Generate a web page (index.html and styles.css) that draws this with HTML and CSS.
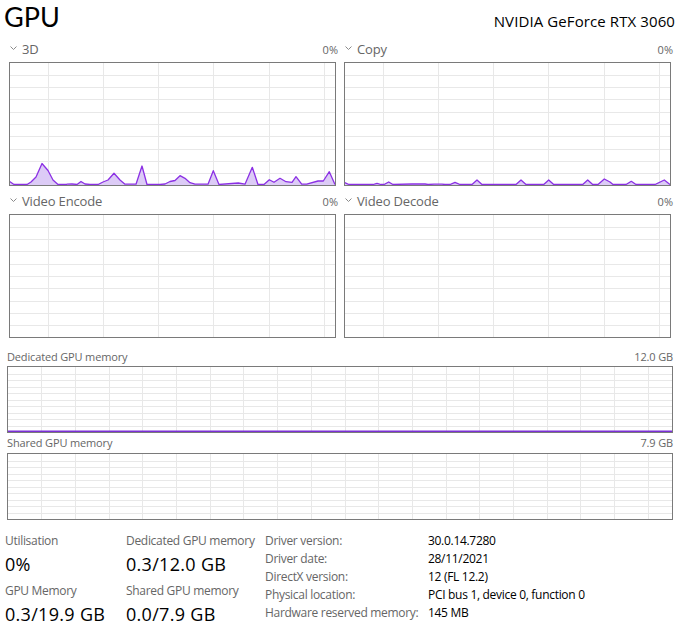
FILE: index.html
```html
<!DOCTYPE html>
<html lang="en">
<head>
<meta charset="utf-8">
<title>GPU</title>
<link rel="stylesheet" href="styles.css">
</head>
<body>
<svg class="defs" width="0" height="0" aria-hidden="true">
  <defs>
    <g id="egrid" fill="none" stroke="#e8e8e8" stroke-width="1" shape-rendering="crispEdges">
      <path d="M0 12.5H325M0 24.5H325M0 36.5H325M0 49.5H325M0 61.5H325M0 73.5H325M0 86.5H325M0 98.5H325M0 110.5H325M38.5 0V122M93.5 0V122M148.5 0V122M203.5 0V122M259.5 0V122M314.5 0V122"/>
    </g>
    <g id="mgrid" fill="none" stroke="#e8e8e8" stroke-width="1" shape-rendering="crispEdges">
      <path d="M0 7.5H664M0 13.5H664M0 20.5H664M0 26.5H664M0 33.5H664M0 39.5H664M0 46.5H664M0 52.5H664M0 59.5H664M33.5 0V65M67.5 0V65M101.5 0V65M134.5 0V65M168.5 0V65M202.5 0V65M235.5 0V65M269.5 0V65M303.5 0V65M337.5 0V65M370.5 0V65M404.5 0V65M438.5 0V65M471.5 0V65M505.5 0V65M539.5 0V65M572.5 0V65M606.5 0V65M640.5 0V65"/>
    </g>
    <symbol id="chev" viewBox="0 0 7 4">
      <polyline points="0.5,0.5 3.5,3.5 6.5,0.5" fill="none" stroke="#8a8a8a" stroke-width="1"/>
    </symbol>
  </defs>
</svg>

<div class="page">
  <header class="top">
    <h1 class="title">GPU</h1>
    <div class="model">NVIDIA GeForce RTX 3060</div>
  </header>

  <section class="engines">
    <div class="engine">
      <div class="engine-head">
        <span class="engine-name"><svg class="chev" width="7" height="4"><use href="#chev"/></svg>3D</span>
        <span class="pct">0%</span>
      </div>
      <div class="chart">
        <svg class="plot" width="325" height="122" viewBox="0 0 325 122">
          <use href="#egrid"/>
          <g transform="translate(-10,-63)">
            <polygon class="area" points="9,185 9,181 14,184.5 27,184.5 31,182 36,177 42,163.5 48,170.5 53,180 58,184.5 66,184.5 67,184.2 72,184 77,184.5 81,181.5 85,184 90,184.5 98,184.5 103,182 108,180 114,173.3 120,180 125,184.2 136,184.2 142,166 147,184.5 160,184.5 165,184 170,181.5 175,180.5 180,175.7 185,178.3 190,182.7 195,184.2 199,184.2 208,184.2 213.3,170.7 219,184.5 238.3,183 245,184.2 252.3,167.3 258,184.5 264,184.5 269.3,179.7 274,182.3 280,178.3 286,181.7 292,182.3 296,176.7 301.7,184.2 306.7,184.2 318,181 323.3,181 329.3,171.7 335,184.5 335,185"/>
            <polyline class="line" points="9,181 14,184.5 27,184.5 31,182 36,177 42,163.5 48,170.5 53,180 58,184.5 66,184.5 67,184.2 72,184 77,184.5 81,181.5 85,184 90,184.5 98,184.5 103,182 108,180 114,173.3 120,180 125,184.2 136,184.2 142,166 147,184.5 160,184.5 165,184 170,181.5 175,180.5 180,175.7 185,178.3 190,182.7 195,184.2 199,184.2 208,184.2 213.3,170.7 219,184.5 238.3,183 245,184.2 252.3,167.3 258,184.5 264,184.5 269.3,179.7 274,182.3 280,178.3 286,181.7 292,182.3 296,176.7 301.7,184.2 306.7,184.2 318,181 323.3,181 329.3,171.7 335,184.5"/>
          </g>
        </svg>
      </div>
    </div>

    <div class="engine">
      <div class="engine-head">
        <span class="engine-name"><svg class="chev" width="7" height="4"><use href="#chev"/></svg>Copy</span>
        <span class="pct">0%</span>
      </div>
      <div class="chart">
        <svg class="plot" width="325" height="122" viewBox="0 0 325 122">
          <use href="#egrid"/>
          <g transform="translate(-345,-63)">
            <polygon class="area" points="344,185 344,182.3 349,184.5 373,184.5 377,183.3 381,184.5 384,184.5 388.7,182 393,184.5 412,184 425,184 428,184.5 434,184.2 442,184.2 445,184.5 450,184.5 455,182.3 460,184.5 472,184.5 477,180 482,184.5 516,184.5 521,180 526,184.5 543.7,184.5 548.7,180 553.7,184.5 582.7,184.5 587.7,180 592.7,184.5 598,184.5 604.3,179 610,182 613,184.5 626,184.5 631.3,181.3 636,184.5 655,184.5 664.3,180 670,184.5 670,185"/>
            <polyline class="line" points="344,182.3 349,184.5 373,184.5 377,183.3 381,184.5 384,184.5 388.7,182 393,184.5 412,184 425,184 428,184.5 434,184.2 442,184.2 445,184.5 450,184.5 455,182.3 460,184.5 472,184.5 477,180 482,184.5 516,184.5 521,180 526,184.5 543.7,184.5 548.7,180 553.7,184.5 582.7,184.5 587.7,180 592.7,184.5 598,184.5 604.3,179 610,182 613,184.5 626,184.5 631.3,181.3 636,184.5 655,184.5 664.3,180 670,184.5"/>
          </g>
        </svg>
      </div>
    </div>

    <div class="engine">
      <div class="engine-head">
        <span class="engine-name"><svg class="chev" width="7" height="4"><use href="#chev"/></svg>Video Encode</span>
        <span class="pct">0%</span>
      </div>
      <div class="chart">
        <svg class="plot" width="325" height="122" viewBox="0 0 325 122"><use href="#egrid"/></svg>
      </div>
    </div>

    <div class="engine">
      <div class="engine-head">
        <span class="engine-name"><svg class="chev" width="7" height="4"><use href="#chev"/></svg>Video Decode</span>
        <span class="pct">0%</span>
      </div>
      <div class="chart">
        <svg class="plot" width="325" height="122" viewBox="0 0 325 122"><use href="#egrid"/></svg>
      </div>
    </div>
  </section>

  <section class="memory">
    <div class="mem-head first"><span>Dedicated GPU memory</span><span>12.0 GB</span></div>
    <div class="mem-chart">
      <svg class="plot" width="664" height="65" viewBox="0 0 664 65">
        <use href="#mgrid"/>
        <path class="mem-line" d="M0 64.2H664"/>
      </svg>
    </div>
    <div class="mem-head"><span>Shared GPU memory</span><span>7.9 GB</span></div>
    <div class="mem-chart">
      <svg class="plot" width="664" height="65" viewBox="0 0 664 65"><use href="#mgrid"/></svg>
    </div>
  </section>

  <section class="stats">
    <div class="stat-col c1">
      <div class="stat"><div class="stat-label">Utilisation</div><div class="stat-value">0%</div></div>
      <div class="stat"><div class="stat-label">GPU Memory</div><div class="stat-value">0.3/19.9 GB</div></div>
    </div>
    <div class="stat-col c2">
      <div class="stat"><div class="stat-label">Dedicated GPU memory</div><div class="stat-value">0.3/12.0 GB</div></div>
      <div class="stat"><div class="stat-label">Shared GPU memory</div><div class="stat-value">0.0/7.9 GB</div></div>
    </div>
    <dl class="info">
      <dt>Driver version:</dt><dd>30.0.14.7280</dd>
      <dt>Driver date:</dt><dd>28/11/2021</dd>
      <dt>DirectX version:</dt><dd>12 (FL 12.2)</dd>
      <dt>Physical location:</dt><dd>PCI bus 1, device 0, function 0</dd>
      <dt>Hardware reserved memory:</dt><dd>145 MB</dd>
    </dl>
  </section>
</div>
</body>
</html>
```

FILE: styles.css
```css
* { box-sizing: border-box; }

html, body {
  margin: 0;
  padding: 0;
  background: #ffffff;
}

body {
  font-family: "Open Sans", "Noto Sans", "Liberation Sans", sans-serif;
  color: #000;
}

.defs {
  display: block;
  width: 0;
  height: 0;
  overflow: hidden;
}

.page {
  width: 684px;
  height: 633px;
  overflow: hidden;
}

/* header */
.top {
  height: 34px;
  display: flex;
  justify-content: space-between;
  align-items: baseline;
  padding: 0 9px 0 4px;
}

.title {
  margin: 0;
  font-family: "Lato", "Open Sans", sans-serif;
  font-size: 27px;
  font-weight: 400;
  line-height: 34px;
}

.model {
  font-size: 15px;
  line-height: 20px;
  letter-spacing: 0.1px;
}

/* engine charts */
.engines {
  display: grid;
  grid-template-columns: 329px 329px;
  column-gap: 6px;
  margin-left: 9px;
}

.engine-head {
  height: 28px;
  padding: 7px 0 0 1px;
  display: flex;
  justify-content: space-between;
  align-items: baseline;
  color: #666666;
}

.engine-name {
  font-size: 13px;
  line-height: 16px;
  letter-spacing: -0.15px;
}

.chev {
  vertical-align: 4px;
  margin-right: 5px;
}

.pct {
  font-size: 11px;
  line-height: 16px;
}

.chart {
  width: 327px;
  height: 124px;
  border: 1px solid #7a7a7a;
  background: #fff;
}

.plot {
  display: block;
}

.area {
  fill: #dccbf6;
  stroke: none;
}

.line {
  fill: none;
  stroke: #8b30e4;
  stroke-width: 1.3;
  stroke-linejoin: round;
}

/* memory charts */
.memory {
  margin-left: 7px;
  width: 666px;
}

.mem-head {
  height: 20px;
  padding-top: 3px;
  display: flex;
  justify-content: space-between;
  align-items: baseline;
  font-size: 11px;
  line-height: 14px;
  letter-spacing: -0.15px;
  color: #666666;
}

.mem-head.first {
  height: 28px;
  padding-top: 11.5px;
}

.mem-chart {
  height: 67px;
  border: 1px solid #7a7a7a;
}

.mem-line {
  fill: none;
  stroke: #7b2fd6;
  stroke-width: 1.4;
}

/* stats */
.stats {
  display: flex;
  align-items: flex-start;
  padding: 13px 0 0 5px;
}

.stat-col.c1 { width: 121px; }
.stat-col.c2 { width: 139px; }

.stat + .stat { margin-top: 7px; }

.stat-label {
  font-size: 12px;
  line-height: 16px;
  letter-spacing: -0.3px;
  color: #666666;
}

.stat-value {
  margin-top: 3px;
  font-size: 18px;
  line-height: 24px;
  letter-spacing: 0.3px;
  color: #000;
}

.info {
  margin: -1px 0 0 0;
  display: grid;
  grid-template-columns: 163px auto;
  align-content: start;
  font-size: 12px;
  line-height: 18px;
  letter-spacing: -0.3px;
}

.info dt {
  color: #666666;
}

.info dd {
  margin: 0;
  color: #000;
}
```
